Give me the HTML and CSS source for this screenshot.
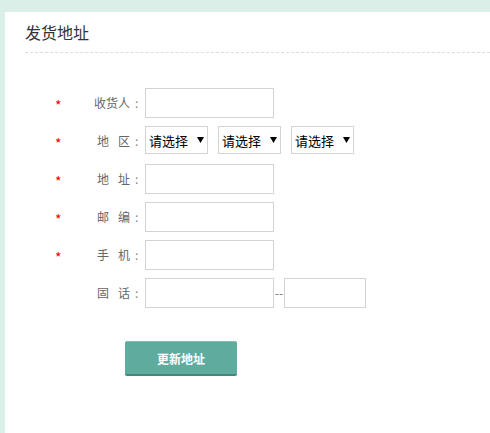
FILE: index.html
```html
<!DOCTYPE html>
<html lang="zh-CN">
<head>
<meta charset="utf-8">
<title>发货地址</title>
<link rel="stylesheet" href="styles.css">
</head>
<body>
<div class="panel">
  <div class="panel-head">发货地址</div>
  <form class="form">
    <div class="row">
      <span class="star">*</span>
      <span class="label"><span>收货人</span></span>
      <span class="colon">:</span>
      <input class="inp" type="text">
    </div>
    <div class="row">
      <span class="star">*</span>
      <span class="label"><span>地</span><span>区</span></span>
      <span class="colon">:</span>
      <div class="selects">
        <div class="sel"><select><option>请选择</option></select><svg class="arrow" width="7" height="6" viewBox="0 0 7 6"><path d="M0 0H7L3.5 6Z" fill="#000"/></svg></div>
        <div class="sel"><select><option>请选择</option></select><svg class="arrow" width="7" height="6" viewBox="0 0 7 6"><path d="M0 0H7L3.5 6Z" fill="#000"/></svg></div>
        <div class="sel"><select><option>请选择</option></select><svg class="arrow" width="7" height="6" viewBox="0 0 7 6"><path d="M0 0H7L3.5 6Z" fill="#000"/></svg></div>
      </div>
    </div>
    <div class="row">
      <span class="star">*</span>
      <span class="label"><span>地</span><span>址</span></span>
      <span class="colon">:</span>
      <input class="inp" type="text">
    </div>
    <div class="row">
      <span class="star">*</span>
      <span class="label"><span>邮</span><span>编</span></span>
      <span class="colon">:</span>
      <input class="inp" type="text">
    </div>
    <div class="row">
      <span class="star">*</span>
      <span class="label"><span>手</span><span>机</span></span>
      <span class="colon">:</span>
      <input class="inp" type="text">
    </div>
    <div class="row">
      <span class="star"></span>
      <span class="label"><span>固</span><span>话</span></span>
      <span class="colon">:</span>
      <input class="inp" type="text"><span class="dash">--</span><input class="inp inp-short" type="text">
    </div>
    <button class="btn" type="button">更新地址</button>
  </form>
</div>
</body>
</html>
```

FILE: styles.css
```css
html, body {
  margin: 0;
  padding: 0;
}
body {
  background: #d9efe8;
  font-family: "Noto Sans CJK SC", "Microsoft YaHei", sans-serif;
  overflow: hidden;
  height: 433px;
}
.panel {
  margin: 12px 0 0 5px;
  background: #fff;
  min-height: 421px;
  padding: 0 0 0 20px;
  box-sizing: border-box;
}
.panel-head {
  padding: 10px 0 10px 0;
  height: 20px;
  line-height: 20px;
  font-size: 16px;
  color: #333;
  border-bottom: 1px dashed #ddd;
}
.form {
  padding-top: 35px;
  margin: 0;
}
.row {
  display: flex;
  align-items: center;
  height: 30px;
  margin-bottom: 8px;
}
.star {
  width: 20px;
  margin-left: 30px;
  color: #e00;
  font-size: 14px;
  line-height: 30px;
  padding-top: 4px;
  box-sizing: border-box;
}
.label {
  width: 55px;
  display: flex;
  justify-content: flex-end;
  gap: 9px;
  font-size: 12px;
  color: #666;
  line-height: 30px;
}
.colon {
  width: 15px;
  box-sizing: border-box;
  padding-left: 5px;
  font-size: 12px;
  color: #888;
  line-height: 30px;
}
.inp {
  width: 129px;
  height: 30px;
  box-sizing: border-box;
  border: 1px solid #d3d3d3;
  margin: 0;
  padding: 0 4px;
  outline: none;
  background: #fff;
}
.inp-short {
  width: 82px;
}
.dash {
  width: 10px;
  text-align: center;
  font-size: 12px;
  color: #777;
  line-height: 30px;
}
.selects {
  display: flex;
  gap: 10px;
  align-self: flex-start;
}
.sel {
  position: relative;
  width: 63px;
  height: 28px;
}
.sel select {
  appearance: none;
  -webkit-appearance: none;
  width: 63px;
  height: 28px;
  box-sizing: border-box;
  border: 1px solid #d3d3d3;
  border-radius: 0;
  background: #fff;
  margin: 0;
  padding: 0 0 0 3px;
  font-family: "Noto Sans CJK SC", "Microsoft YaHei", sans-serif;
  font-size: 13px;
  color: #000;
  outline: none;
}
.arrow {
  position: absolute;
  left: 52px;
  top: 11px;
  pointer-events: none;
}
.btn {
  display: block;
  margin: 33px 0 0 100px;
  width: 112px;
  height: 35px;
  box-sizing: border-box;
  background: #5fac9f;
  border: none;
  border-top: 1px solid #7dbdb2;
  border-bottom: 2px solid #40897c;
  border-radius: 2px;
  color: #fff;
  font-family: "Noto Sans CJK SC", "Microsoft YaHei", sans-serif;
  font-size: 12px;
  font-weight: bold;
  padding: 0;
  cursor: pointer;
}
```
